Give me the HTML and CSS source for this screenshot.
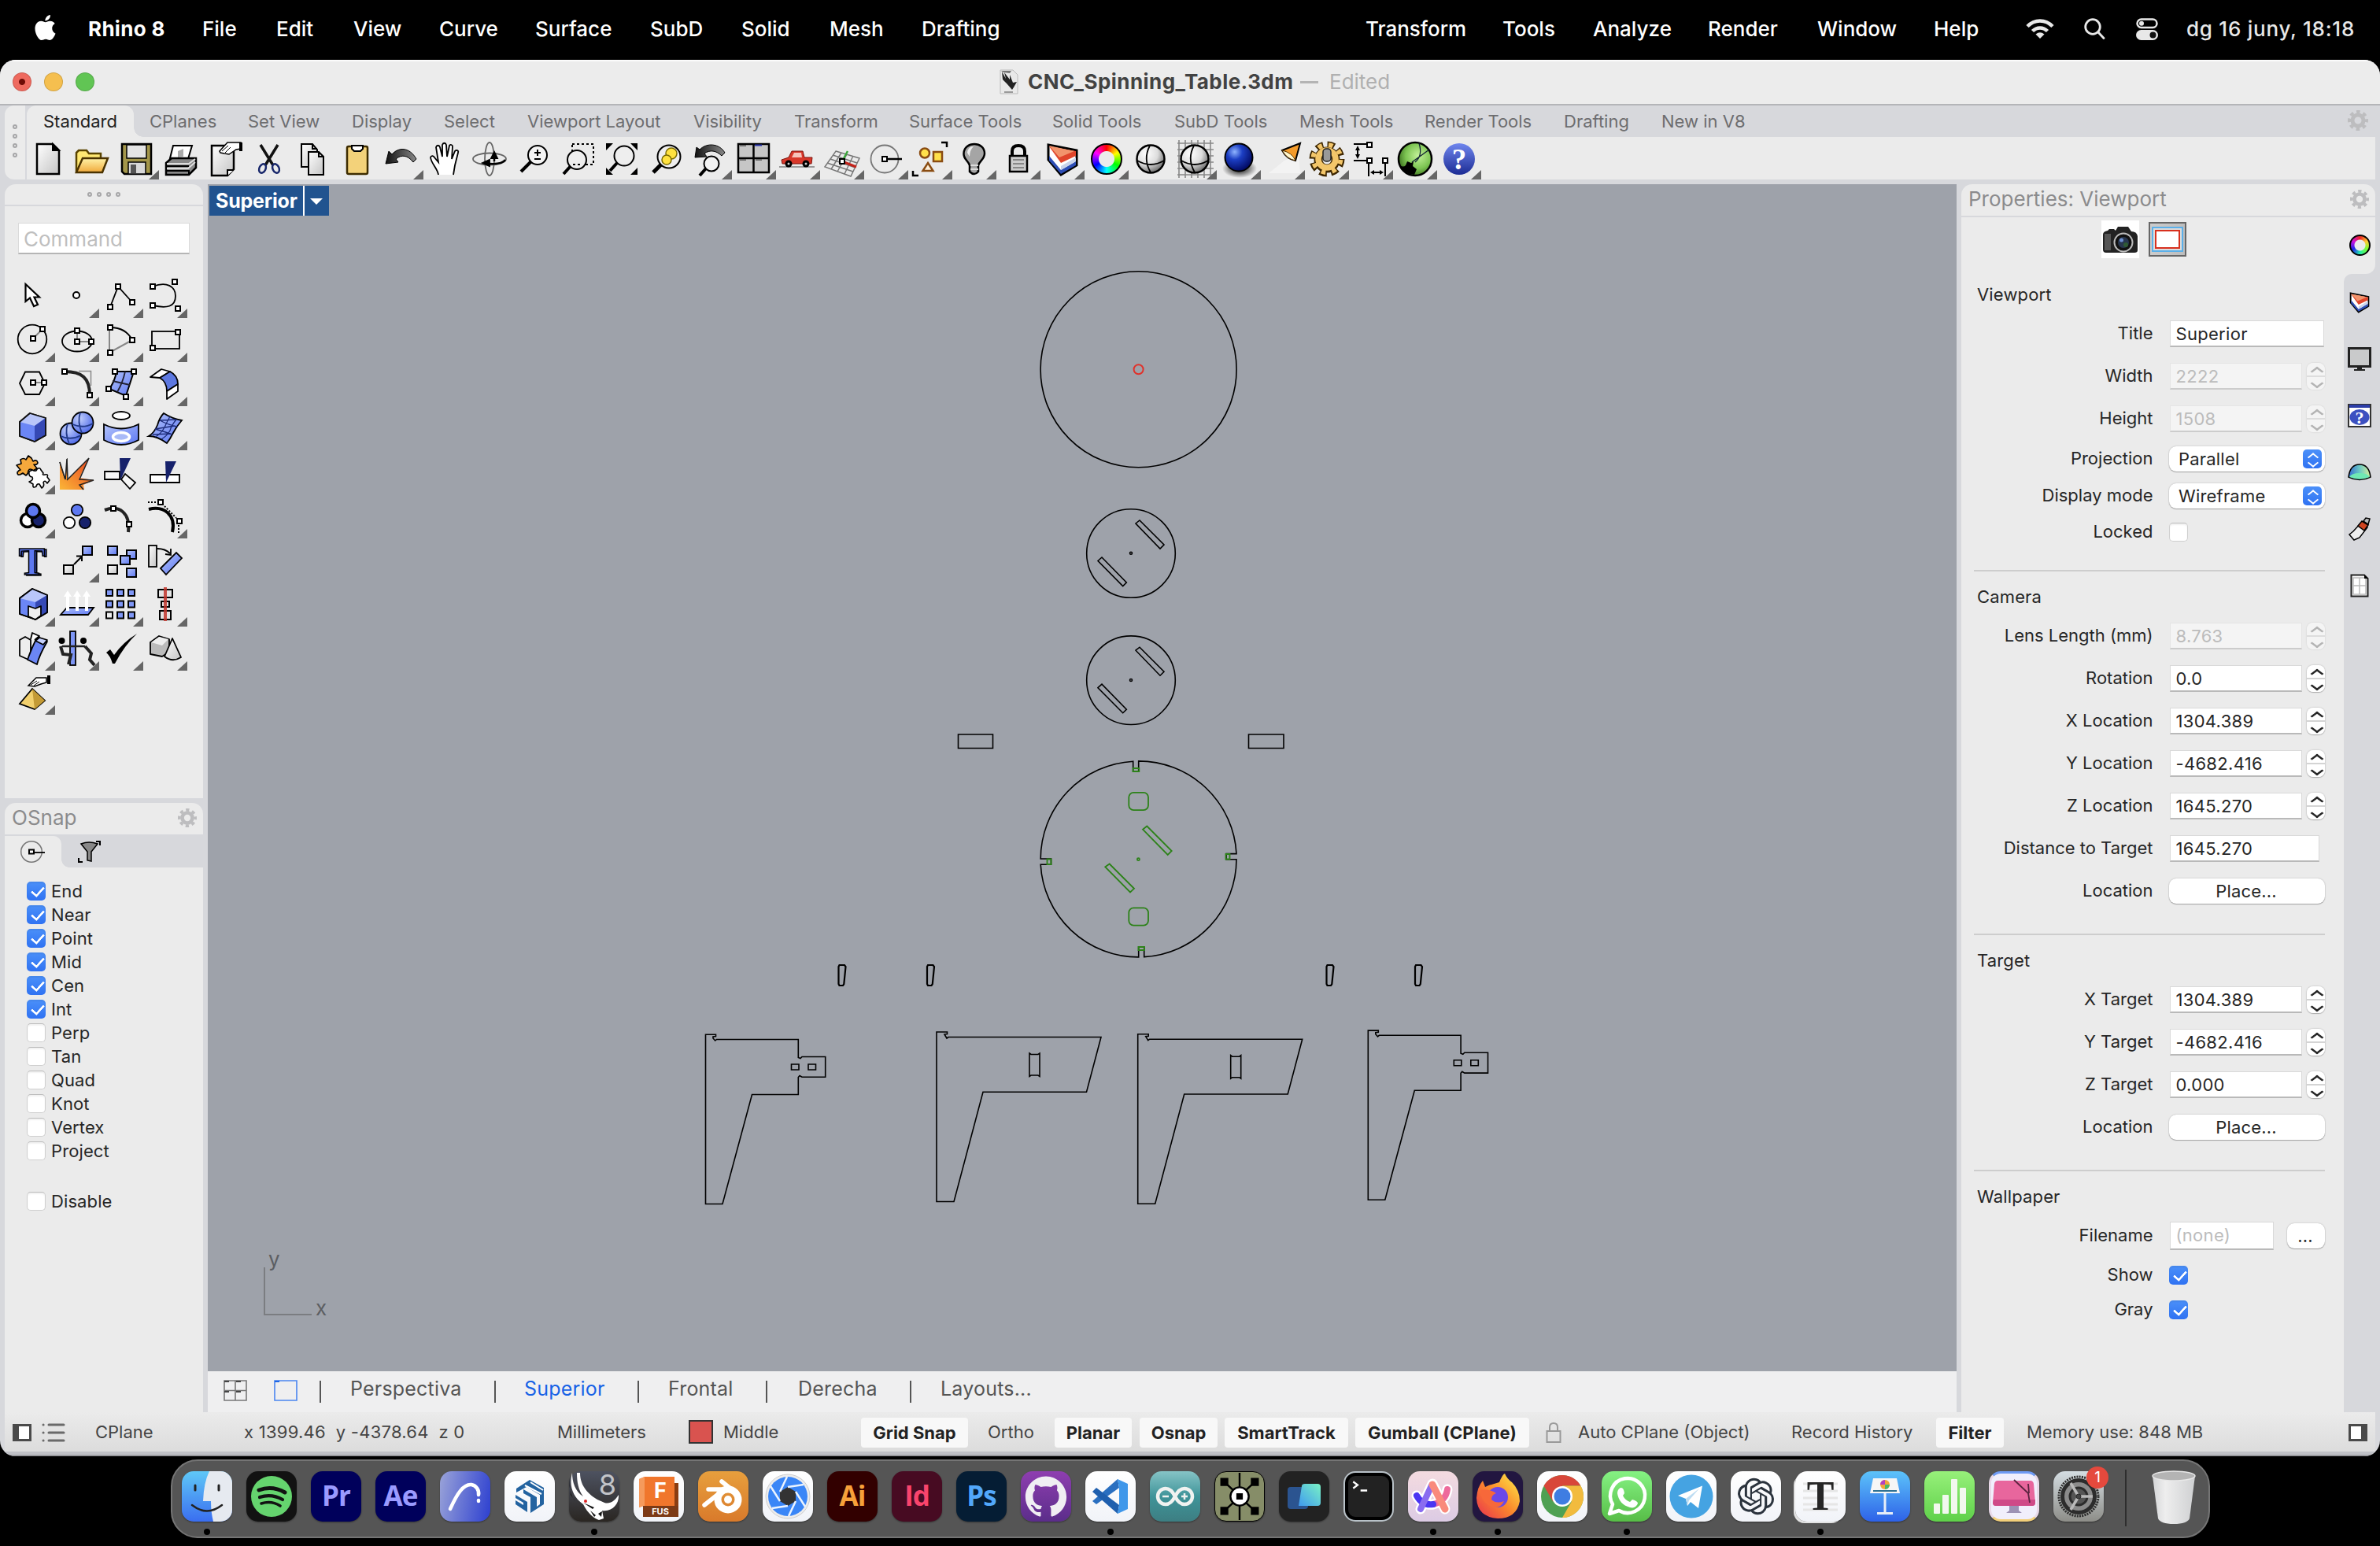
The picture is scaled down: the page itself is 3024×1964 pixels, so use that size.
FILE: index.html
```html
<!DOCTYPE html>
<html lang="en">
<head>
<meta charset="utf-8">
<title>CNC_Spinning_Table.3dm</title>
<link rel="stylesheet" href="styles.css">
</head>
<body>
<svg class="defs" width="0" height="0">
  <defs>
    <g id="h"><rect x="-3" y="-3" width="6" height="6" fill="#fff" stroke="#000" stroke-width="2"/></g>
    <linearGradient id="blue" x1="0" y1="0" x2="1" y2="1"><stop offset="0" stop-color="#b4c4fb"/><stop offset="1" stop-color="#5c77f2"/></linearGradient>
    <linearGradient id="gray" x1="0" y1="0" x2="1" y2="1"><stop offset="0" stop-color="#fff"/><stop offset="1" stop-color="#c4c4c4"/></linearGradient>
    <linearGradient id="dark" x1="0" y1="0" x2="1" y2="0"><stop offset="0" stop-color="#111"/><stop offset="1" stop-color="#888"/></linearGradient>
    <linearGradient id="gold" x1="0" y1="0" x2="0" y2="1"><stop offset="0" stop-color="#fff3a8"/><stop offset="1" stop-color="#f0a93a"/></linearGradient>
    <linearGradient id="fire" x1="0" y1="1" x2="1" y2="0"><stop offset="0" stop-color="#fbb637"/><stop offset="1" stop-color="#e8401f"/></linearGradient>
    <radialGradient id="ball" cx=".35" cy=".3" r=".75"><stop offset="0" stop-color="#fff"/><stop offset=".55" stop-color="#dcdcdc"/><stop offset="1" stop-color="#666"/></radialGradient>
    <radialGradient id="bball" cx=".35" cy=".3" r=".75"><stop offset="0" stop-color="#c3d0fc"/><stop offset="1" stop-color="#4c68e8"/></radialGradient>
    <radialGradient id="navyball" cx=".35" cy=".3" r=".7"><stop offset="0" stop-color="#8fb4ff"/><stop offset=".4" stop-color="#1c3fc4"/><stop offset="1" stop-color="#020b66"/></radialGradient>
    <radialGradient id="greenball" cx=".6" cy=".4" r=".7"><stop offset="0" stop-color="#c4f29a"/><stop offset=".55" stop-color="#7cc452"/><stop offset="1" stop-color="#2b5c12"/></radialGradient>
    <radialGradient id="shade"><stop offset="0" stop-color="#000"/><stop offset="1" stop-color="#000" stop-opacity="0"/></radialGradient>
    <linearGradient id="help" x1="0" y1="0" x2="0" y2="1"><stop offset="0" stop-color="#6f86ee"/><stop offset="1" stop-color="#1c2c94"/></linearGradient>
    <g id="gear"><circle cx="13" cy="13" r="7" fill="none" stroke="#bdbdbf" stroke-width="5"/><circle cx="13" cy="13" r="11" fill="none" stroke="#bdbdbf" stroke-width="4" stroke-dasharray="4.6 4.04" stroke-dashoffset="2.3"/></g>
    <g id="layers"><path d="M10 12L46 19V38L26 50L10 31Z" fill="#fff" stroke="#000" stroke-width="3"/><path d="M11 26L26 44L45 33V38L26 49L11 32Z" fill="#2d4db4"/><path d="M11 14L26 35L45 26V20Z" fill="#e0452b"/><path d="M11 13L24 28L43 20Z" fill="#f2946c"/><path d="M26 39V44L45 33V28Z" fill="#c9d3ea"/></g>
  </defs>
</svg>

<header class="menubar">
  <svg class="apple" viewBox="2 0 20 24" fill="#fff"><path d="M12.152 6.896c-.948 0-2.415-1.078-3.96-1.04-2.04.027-3.91 1.183-4.961 3.014-2.117 3.675-.546 9.103 1.519 12.09 1.013 1.454 2.208 3.09 3.792 3.039 1.52-.065 2.09-.987 3.935-.987 1.831 0 2.35.987 3.96.948 1.637-.026 2.676-1.48 3.676-2.948 1.156-1.688 1.636-3.325 1.662-3.415-.039-.013-3.182-1.221-3.22-4.857-.026-3.04 2.48-4.494 2.597-4.559-1.429-2.09-3.623-2.324-4.39-2.376-2-.156-3.675 1.09-4.61 1.09zM15.53 3.83c.843-1.012 1.4-2.427 1.245-3.83-1.207.052-2.662.805-3.532 1.818-.78.896-1.454 2.338-1.273 3.714 1.338.104 2.715-.688 3.559-1.701"/></svg>
  <b>Rhino 8</b><span>File</span><span>Edit</span><span>View</span><span>Curve</span><span>Surface</span><span>SubD</span><span>Solid</span><span>Mesh</span><span>Drafting</span><span>Transform</span><span>Tools</span><span>Analyze</span><span>Render</span><span>Window</span><span>Help</span>
  <svg width="36" height="26" viewBox="0 0 36 26" fill="none" stroke="#e8e8e8" stroke-width="4.5"><path d="M2 9.5C11 0 25 0 34 9.500M8.500 15.500C14 10 22 10 27.500 15.500"/><path d="M18 25L12.500 19.500Q18 15 23.500 19.500Z" fill="#e8e8e8" stroke="none"/></svg>
  <svg width="27" height="27" viewBox="0 0 27 27" fill="none" stroke="#e8e8e8" stroke-width="2.800" stroke-linecap="round"><circle cx="11" cy="11" r="9.300"/><path d="M18 18L25 25.500"/></svg>
  <svg width="28" height="28" viewBox="0 0 28 28"><rect x="1.500" y="1.500" width="25" height="10.500" rx="5.250" fill="none" stroke="#e8e8e8" stroke-width="2.500"/><circle cx="7" cy="6.700" r="3" fill="#e8e8e8"/><rect y="15" width="28" height="13" rx="6.500" fill="#e8e8e8"/><circle cx="21.500" cy="21.500" r="4" fill="#111"/></svg>
  <span class="clock">dg 16 juny, 18:18</span>
</header>

<div class="window">
  <div class="titlebar">
    <div class="lights"><i class="red"></i><i class="yellow"></i><i class="green"></i></div>
    <div class="doc">
      <svg width="24" height="32" viewBox="0 0 24 32"><path d="M1 1H17L23 7V31H1Z" fill="#e9e9e9" stroke="#bbb"/><path d="M3 3L8 12L6 4L13 13L13 7L17 17L22 16L18 23L16 26L9 18L4 13Z" fill="#222"/><path d="M2 2H15L13 5L5 4Z" fill="#777"/><path d="M6 29H17" stroke="#999" stroke-width="2"/></svg>
      <b>CNC_Spinning_Table.3dm</b><span class="dash"></span><span class="edited">Edited</span>
    </div>
  </div>

  <div class="ribbon">
    <div class="grip"><i></i><i></i><i></i><i></i></div>
    <div class="ribbon-main">
      <nav class="tabs">
        <span class="tab-on">Standard</span><span>CPlanes</span><span>Set View</span><span>Display</span><span>Select</span><span>Viewport Layout</span><span>Visibility</span><span>Transform</span><span>Surface Tools</span><span>Solid Tools</span><span>SubD Tools</span><span>Mesh Tools</span><span>Render Tools</span><span>Drafting</span><span>New in V8</span>
        <svg width="26" height="26"><use href="#gear"/></svg>
      </nav>
      <div class="toolbar">
        <div class="cell"><svg viewBox="0 0 56 56"><path d="M13 11H33L41 19V49H13Z" fill="url(#gray)" stroke="#000" stroke-width="2.500"/><path d="M33 11V19H41Z" stroke="#000" stroke-width="2"/></svg></div>
        <div class="cell"><svg viewBox="0 0 56 56"><path d="M7 47V22L10 19H20L23 23H38V29" fill="#ffe873" stroke="#5a4400" stroke-width="2.500"/><path d="M7 47L15 29H47L40 47Z" fill="url(#gold)" stroke="#4a3200" stroke-width="2.500"/></svg></div>
        <div class="cell more"><svg viewBox="0 0 56 56"><path d="M9 11H46V49H12L9 46Z" fill="#a3964a" stroke="#000" stroke-width="2.500"/><path d="M15 12H40V29H15Z" fill="#e4e4e4" stroke="#000" stroke-width="1.500"/><path d="M17 34H39V49H17Z" fill="#d8d8d8" stroke="#000" stroke-width="1.500"/><path d="M20 37H27V48H20Z" fill="#555"/></svg></div>
        <div class="cell"><svg viewBox="0 0 56 56"><path d="M18 13H42L36 33H13Z" fill="#fff" stroke="#000" stroke-width="2"/><path d="M24 20L31 17V27L24 28Z" fill="#aaa"/><path d="M9 35L16 29H47V41L38 50H9Z" fill="#888" stroke="#000" stroke-width="2.500"/><path d="M10 36H38L46 30M10 42H37L46 34" fill="none" stroke="#ddd" stroke-width="2"/><path d="M9 39H38M9 45H38V50" fill="none" stroke="#000" stroke-width="2"/></svg></div>
        <div class="cell"><svg viewBox="0 0 56 56"><path d="M11 13H39V43L31 51H11Z" fill="url(#gray)" stroke="#000" stroke-width="2.500"/><path d="M31 51V44H39" fill="#fff" stroke="#000" stroke-width="2"/><path d="M21 20L31 9H48V17L42 18L33 24L27 23L22 22Z" fill="#fff" stroke="#000" stroke-width="1.500"/><path d="M24 20L32 13M28 22L35 15" stroke="#000"/><path d="M46 9H50V20H46Z"/></svg></div>
        <div class="cell"><svg viewBox="0 0 56 56"><path d="M17 12L33 38M39 12L23 38" stroke="#111" stroke-width="3.500"/><ellipse cx="19.500" cy="42" rx="4" ry="6" transform="rotate(25 19.500 42)" fill="none" stroke="#18276b" stroke-width="2.500"/><ellipse cx="36.500" cy="42" rx="4" ry="6" transform="rotate(-25 36.500 42)" fill="none" stroke="#18276b" stroke-width="2.500"/></svg></div>
        <div class="cell"><svg viewBox="0 0 56 56"><path d="M13 11H27L33 18V40H13Z" fill="url(#gray)" stroke="#000" stroke-width="2"/><path d="M22 21H35L41 27V50H22Z" fill="url(#gray)" stroke="#000" stroke-width="2"/><path d="M35 21V27H41M27 11V17H33" fill="none" stroke="#000" stroke-width="2"/></svg></div>
        <div class="cell"><svg viewBox="0 0 56 56"><rect x="15" y="14" width="26" height="35" rx="2" fill="#f3d27a" stroke="#3d2c00" stroke-width="2.500"/><path d="M21 13H35V17L32 20H24L21 17Z" fill="#fff" stroke="#000" stroke-width="2"/></svg></div>
        <div class="cell more"><svg viewBox="0 0 56 56"><path d="M8 36L12 20L16 24C24 15 38 14 47 30L43 34C36 25 28 24 21 30L24 34Z" fill="url(#dark)" stroke="#000"/></svg></div>
        <div class="cell"><svg viewBox="0 0 56 56"><path d="M19 50C18 42 10 36 9 28C10 25 13 26 14 28L19 34L16 15C17 12 20 12 21 15L24 27L24 12C25 9 28 9 29 12L30 27L33 13C34 11 37 12 37 14L36 30L40 20C42 18 45 19 44 22L40 38L38 50" fill="#fff" stroke="#000" stroke-width="1.800"/></svg></div>
        <div class="cell"><svg viewBox="0 0 56 56" fill="none" stroke="#666" stroke-width="1.800"><ellipse cx="28" cy="30" rx="21" ry="7.500"/><ellipse cx="28" cy="30" rx="6" ry="21"/><path d="M19 35L28 31V39ZM34 21L38 29H30Z" fill="#000" stroke="#000"/><path d="M28 36Q44 37 48 31M34 29V33" stroke="#000" stroke-width="2.500"/></svg></div>
        <div class="cell"><svg viewBox="0 0 56 56"><path d="M12 46L25 33" stroke="#000" stroke-width="4"/><circle cx="33" cy="25" r="12" fill="#f4f4f4" stroke="#000" stroke-width="2"/><path d="M29 22H37M33 18V26M29 30H37" stroke="#000" stroke-width="2"/></svg></div>
        <div class="cell"><svg viewBox="0 0 56 56"><rect x="21" y="11" width="27" height="26" fill="none" stroke="#000" stroke-width="2" stroke-dasharray="3 3"/><path d="M10 49L19 39" stroke="#000" stroke-width="4"/><circle cx="27" cy="31" r="12" fill="#eee" stroke="#000" stroke-width="2"/><path d="M22 37H33" stroke="#000" stroke-width="2" stroke-dasharray="3 3"/></svg></div>
        <div class="cell"><svg viewBox="0 0 56 56"><path d="M8 10H17L8 19ZM48 10V19L39 10ZM8 50V41L17 50ZM48 50H39L48 41Z"/><path d="M13 45L22 35" stroke="#000" stroke-width="4"/><circle cx="31" cy="26" r="12.500" fill="#eee" stroke="#000" stroke-width="2"/></svg></div>
        <div class="cell"><svg viewBox="0 0 56 56"><path d="M12 47L22 37" stroke="#000" stroke-width="5"/><circle cx="32" cy="27" r="14.500" fill="#eee" stroke="#000" stroke-width="2"/><circle cx="35" cy="23" r="7" fill="#ffe23f" stroke="#7a6a00" stroke-width="1.500"/><circle cx="29" cy="31" r="6" fill="#ffe23f" stroke="#7a6a00" stroke-width="1.500"/></svg></div>
        <div class="cell more"><svg viewBox="0 0 56 56"><path d="M9 28L11 15L15 18C24 9 40 10 47 22L43 26C36 19 28 18 21 23L24 27Z" fill="url(#dark)" stroke="#000"/><path d="M15 51L23 42" stroke="#000" stroke-width="4"/><circle cx="30" cy="36" r="9.500" fill="#f2f2f2" stroke="#000" stroke-width="2"/></svg></div>
        <div class="cell more"><svg viewBox="0 0 56 56"><rect x="8" y="11" width="39" height="36" fill="#c6c6c6" stroke="#000" stroke-width="2.500"/><path d="M27.500 10V47M8 29H47" stroke="#000" stroke-width="2.500"/><path d="M29 12.500H38" stroke="#2430a8" stroke-width="2"/><path d="M10 13H18M10 31H18M30 31H38" stroke="#666" stroke-width="2"/></svg></div>
        <div class="cell more"><svg viewBox="0 0 56 56"><path d="M4 40H49" stroke="#999" stroke-width="2"/><path d="M8 36L7 31L16 28L20 20H34L36 28H46L45 36Z" fill="#d8372a" stroke="#7c130c"/><path d="M20 28L23 22H32L33 28Z" fill="#f6c3bb"/><circle cx="16" cy="36" r="4.500"/><circle cx="38" cy="36" r="4.500"/><circle cx="16" cy="36" r="1.500" fill="#ccc"/><circle cx="38" cy="36" r="1.500" fill="#ccc"/></svg></div>
        <div class="cell more"><svg viewBox="0 0 56 56" fill="none" stroke="#777" stroke-width="1.500"><path d="M20 20L50 29L39 52L6 40ZM27 22L14 43M34 24L22 46M42 26L31 49M16 25L47 35M13 30L45 41M9 35L42 46"/><path d="M28 33L35 20" stroke="#3aa53a" stroke-width="2.500"/><path d="M28 33L46 40" stroke="#c3241c" stroke-width="3"/><use href="#h" x="28" y="33"/></svg></div>
        <div class="cell more"><svg viewBox="0 0 56 56"><circle cx="26" cy="30" r="17.500" fill="none" stroke="#777" stroke-width="1.800"/><path d="M27 30H48" stroke="#000" stroke-width="2.500"/><use href="#h" x="26" y="30"/></svg></div>
        <div class="cell more"><svg viewBox="0 0 56 56" fill="#ffe04a" stroke="#8a4c12" stroke-width="2.500"><circle cx="21" cy="22.500" r="6"/><rect x="32" y="21" width="11" height="12"/><path d="M25 35L31.500 45H18.500Z" fill="#fff2dc"/><path d="M42 9H49V15M6 45V51H13" fill="none" stroke="#000"/></svg></div>
        <div class="cell more"><svg viewBox="0 0 56 56"><path d="M22 38C20 32 14 30 14.500 23C15 7 41 7 41 23C41 30 35 32 33 38V46Q28 52 22 46Z" fill="#a5a5a5" stroke="#000" stroke-width="2.500"/><path d="M19 22Q20 14 27 14Q22 19 22 27" fill="#eee"/><path d="M23 38H33M23 43H33" stroke="#ddd" stroke-width="2"/></svg></div>
        <div class="cell more"><svg viewBox="0 0 56 56"><path d="M20 26V20Q20 13 28 13T36 20V26" fill="none" stroke="#000" stroke-width="4"/><rect x="17" y="26" width="22" height="20" fill="#ccc" stroke="#000" stroke-width="2.500"/><path d="M21 31H35M21 36H35M21 41H35" stroke="#888" stroke-width="2"/></svg></div>
        <div class="cell more"><svg viewBox="0 0 56 56"><use href="#layers"/></svg></div>
        <div class="cell more"><i class="wheel"></i></div>
        <div class="cell"><svg viewBox="0 0 56 56"><circle cx="28" cy="30" r="17.500" fill="url(#ball)" stroke="#000" stroke-width="2.500"/><path d="M27 13Q18 30 28 47M11 32Q28 42 45 32" fill="none" stroke="#000" stroke-width="1.800"/></svg></div>
        <div class="cell more"><svg viewBox="0 0 56 56"><path d="M6 10H52M6 18H52M6 26H52M6 34H52M6 42H52M6 50H52M8 6V54M16 6V54M24 6V54M32 6V54M40 6V54M48 6V54" stroke="#888" stroke-width="1.600"/><circle cx="28" cy="30" r="17.500" fill="url(#ball)" stroke="#000" stroke-width="2.500"/><path d="M27 13Q18 30 28 47M11 32Q28 42 45 32" fill="none" stroke="#000" stroke-width="1.800"/></svg></div>
        <div class="cell more"><svg viewBox="0 0 56 56"><ellipse cx="29" cy="42" rx="22" ry="12" fill="url(#shade)"/><circle cx="28" cy="28" r="17.500" fill="url(#navyball)" stroke="#000" stroke-width="2"/></svg></div>
        <div class="cell more"><svg viewBox="0 0 56 56"><path d="M30 32L10 48H50L48 24Z" fill="#f7f7f7" opacity=".7"/><path d="M27 19L50 10L44 32Q33 30 27 19Z" fill="#f49b2a" stroke="#000" stroke-width="2"/><path d="M27 19Q33 30 44 32Q40 22 27 19Z" fill="#fff6cc" stroke="#5a3300"/></svg></div>
        <div class="cell more"><svg viewBox="0 0 56 56" fill="none"><circle cx="28" cy="30" r="17.500" stroke="#3d2600" stroke-width="10" stroke-dasharray="8.600 5.145"/><circle cx="28" cy="31" r="11" stroke="#3d2600" stroke-width="11"/><circle cx="28" cy="29.500" r="17.500" stroke="#f3c66a" stroke-width="6" stroke-dasharray="5.400 8.345" stroke-dashoffset="-1.600"/><circle cx="28" cy="30" r="11" stroke="#f3c66a" stroke-width="7.500"/><rect x="23" y="17" width="10" height="16" rx="4" fill="#999" stroke="#222" stroke-width="1.500"/></svg></div>
        <div class="cell more"><svg viewBox="0 0 56 56" fill="none" stroke="#000" stroke-width="2"><path d="M6 11H24M6 32H24M11 15V28M25 35V52M46 35V52M29 47H42"/><path d="M11 13L8 19H14ZM11 30L8 24H14ZM27 47L32 44V50ZM44 47L39 44V50Z" fill="#000" stroke="none"/><use href="#h" x="26" y="12"/><use href="#h" x="26" y="32"/><use href="#h" x="46" y="32"/></svg></div>
        <div class="cell more"><svg viewBox="0 0 56 56"><circle cx="28" cy="30" r="21" fill="url(#greenball)" stroke="#000" stroke-width="2.500"/><path d="M9 38Q13 41 16 38L18 33L23 35L26 33L25 39L30 43L27 50Q14 49 9 38Z"/><path d="M24 34L46 18M33 10Q38 26 28 34" fill="none" stroke="#123" stroke-width="1.300"/></svg></div>
        <div class="cell more"><svg viewBox="0 0 56 56"><circle cx="28" cy="30" r="20" fill="url(#help)"/><text x="28" y="43" class="q">?</text></svg></div>
      </div>
    </div>
  </div>

  <main class="main">
    <aside class="left">
      <section class="panel tools-panel">
        <div class="grip-row"><i></i><i></i><i></i><i></i></div>
        <div class="command">Command</div>
        <div class="tools">
          <div class="cell"><svg viewBox="0 0 56 56"><path d="M18.500 13V35L24 30.500L29 41L34 39L29.500 29.500H36Z" fill="#fff" stroke="#000" stroke-width="2.200"/></svg></div>
          <div class="cell more"><svg viewBox="0 0 56 56"><circle cx="27" cy="27" r="4" fill="#fff" stroke="#000" stroke-width="2"/></svg></div>
          <div class="cell more"><svg viewBox="0 0 56 56"><path d="M14 42L24 16L42 36" fill="none" stroke="#000" stroke-width="1.800"/><use href="#h" x="14" y="42"/><use href="#h" x="24" y="16"/><use href="#h" x="42" y="36"/></svg></div>
          <div class="cell more"><svg viewBox="0 0 56 56"><path d="M12 16C30 9 41 16 41 28C41 42 30 44 12 40" fill="none" stroke="#000" stroke-width="1.800"/><use href="#h" x="12" y="16"/><use href="#h" x="40" y="10"/><use href="#h" x="12" y="40"/><use href="#h" x="44" y="44"/></svg></div>

          <div class="cell more"><svg viewBox="0 0 56 56"><circle cx="27" cy="27" r="18.300" fill="none" stroke="#000" stroke-width="1.800"/><path d="M28 26L40 14" stroke="#888" stroke-width="2"/><use href="#h" x="28" y="26"/><use href="#h" x="40" y="14"/></svg></div>
          <div class="cell more"><svg viewBox="0 0 56 56"><ellipse cx="28" cy="29.500" rx="19" ry="13" fill="none" stroke="#000" stroke-width="1.800"/><path d="M28 16V30H46" fill="none" stroke="#888" stroke-width="2"/><use href="#h" x="28" y="16"/><use href="#h" x="28" y="30"/><use href="#h" x="46" y="30"/></svg></div>
          <div class="cell more"><svg viewBox="0 0 56 56" fill="none"><path d="M42 28L13 44V12" stroke="#888" stroke-width="2"/><path d="M14 12Q34 12 42 28" stroke="#000" stroke-width="1.800"/><use href="#h" x="14" y="12"/><use href="#h" x="14" y="44"/><use href="#h" x="42" y="28"/></svg></div>
          <div class="cell more"><svg viewBox="0 0 56 56"><rect x="11" y="17" width="35" height="22" fill="none" stroke="#000" stroke-width="1.800"/><use href="#h" x="44" y="18"/><use href="#h" x="12" y="38"/></svg></div>

          <div class="cell more"><svg viewBox="0 0 56 56"><path d="M11 27L18 12.500H36L43 27L36 41H18Z" fill="none" stroke="#000" stroke-width="1.800"/><path d="M28 26H42" stroke="#888" stroke-width="2"/><use href="#h" x="28" y="26"/><use href="#h" x="42" y="26"/></svg></div>
          <div class="cell more"><svg viewBox="0 0 56 56" fill="none"><path d="M30 11.500H45.500V30" stroke="#888" stroke-width="1.500"/><path d="M12 12C34 12 44 20 44 42" stroke="#222" stroke-width="4"/><use href="#h" x="12" y="12"/><use href="#h" x="44" y="42"/></svg></div>
          <div class="cell more"><svg viewBox="0 0 56 56"><path d="M22 12L44 12L34 43L13 34Q20 24 22 12Z" fill="url(#blue)" stroke="#000" stroke-width="2"/><path d="M17 24L39 29M33 12Q30 26 23 38" fill="none" stroke="#223" stroke-width="1.800"/><use href="#h" x="20" y="12"/><use href="#h" x="44" y="12"/><use href="#h" x="12" y="34"/><use href="#h" x="34" y="44"/></svg></div>
          <div class="cell more"><svg viewBox="0 0 56 56" stroke="#000" stroke-width="1.800" stroke-linejoin="round"><path d="M9 19L23 9L34 12L21 20Z" fill="#fff"/><path d="M21 20L34 12Q44 17 44 28L30 37Q30 25 21 20Z" fill="#5d78e0"/><path d="M30 37L44 28V37L30 47Z" fill="#fff"/></svg></div>

          <div class="cell more"><svg viewBox="0 0 56 56" stroke="#111" stroke-width="1.800" stroke-linejoin="round"><path d="M11 20L24 9L44 15V37L30 45L11 38Z" fill="#6b86f5"/><path d="M11 20L24 9L44 15L30 25Z" fill="#b9c6f9" stroke="none"/><path d="M30 25L44 15V37L30 45Z" fill="#3549b5" stroke="none"/><path d="M11 20L24 9L44 15V37L30 45L11 38Z" fill="none"/></svg></div>
          <div class="cell more"><svg viewBox="0 0 56 56" stroke="#000" stroke-width="1.800"><circle cx="20" cy="35" r="13.500" fill="url(#bball)"/><path d="M16 22Q12 34 18 48M7 38Q20 44 33 37" fill="none" stroke="#223a8a"/><circle cx="35" cy="21" r="13.500" fill="url(#bball)"/><path d="M32 8Q28 20 34 34M22 23Q36 29 48 22" fill="none" stroke="#223a8a"/></svg></div>
          <div class="cell more"><svg viewBox="0 0 56 56" stroke="#000" stroke-width="1.800"><ellipse cx="28" cy="12" rx="11" ry="5" fill="#fff"/><path d="M6 23Q28 34 50 23V43Q28 55 6 43Z" fill="url(#blue)"/><ellipse cx="28" cy="39" rx="10.500" ry="5.500" fill="#a9baf7" stroke="#fff" stroke-width="3.500"/></svg></div>
          <div class="cell more"><svg viewBox="0 0 56 56" stroke="#000" stroke-width="1.800"><path d="M26 9Q37 16 49 18Q42 26 38 34Q34 42 30 47Q18 38 7 38Q14 34 18 24Q21 14 26 9Z" fill="url(#blue)"/><path d="M21 18Q32 24 44 26M15 29Q26 32 37 36M34 13Q30 20 27 27Q22 36 15 39M42 17Q36 24 34 31Q30 38 23 42M21 18L42 17M15 29L40 25M12 36L35 35" fill="none" stroke="#1b2a78" stroke-width="1.300"/></svg></div>

          <div class="cell more"><svg viewBox="0 0 56 56" stroke="#000" stroke-width="1.600" stroke-linejoin="round"><path d="M7 19L13 17L12 12Q16 9 19 12L22 7L26 10L28 14Q33 11 34 16Q33 19 29 18L33 23L28 26Q24 22 22 26Q22 30 19 32L15 29Q8 34 8 28Q10 25 12 25Z" fill="#f5a83c"/><path d="M23 27L27 25Q32 28 33 24Q37 21 38 25L41 29Q39 32 43 31Q48 30 46 34L49 38L46 42Q43 37 41 41Q43 45 39 48L36 43Q33 42 32 46Q27 49 28 43L23 40Q29 38 27 34Q22 34 23 27Z" fill="#fff"/></svg></div>
          <div class="cell"><svg viewBox="0 0 56 56"><path d="M6 50V15L15 10V38L43 10L31 35L49 38L36 44L37 50Z" fill="url(#fire)"/><path d="M6 15L13 37L15 10M15 38L43 10L31 37L49 38L31 44L36 50" fill="none" stroke="#222" stroke-width="1.500"/><path d="M6 14L13 37L15 9H6Z" fill="#ebebeb"/><path d="M6 15L13 37L15 11L16 37" fill="none" stroke="#222" stroke-width="1.500"/></svg></div>
          <div class="cell"><svg viewBox="0 0 56 56"><path d="M7 27H26V37H7ZM28 37L33 30L46 41L39 49Z" fill="#f6f6f6" stroke="#000" stroke-width="1.800"/><path d="M26 10H40L27 38Z" fill="#16216b"/></svg></div>
          <div class="cell"><svg viewBox="0 0 56 56"><path d="M9 31H46V41H9Z" fill="#fff" stroke="#000" stroke-width="1.800"/><path d="M28 14H42L29 41Z" fill="#16216b"/></svg></div>

          <div class="cell more"><svg viewBox="0 0 56 56" stroke="#000" stroke-width="3.500"><circle cx="21" cy="33" r="8.500" fill="#fff"/><circle cx="35" cy="33" r="8.500" fill="#16216b"/><circle cx="28" cy="21" r="8.500" fill="#5d78f0"/></svg></div>
          <div class="cell"><svg viewBox="0 0 56 56" stroke="#000" stroke-width="1.800"><circle cx="28" cy="20" r="7.200" fill="#5d78f0"/><circle cx="18" cy="36" r="7.200" fill="#fff"/><circle cx="38" cy="36" r="7.200" fill="#16216b"/></svg></div>
          <div class="cell"><svg viewBox="0 0 56 56" fill="none"><path d="M7 20C26 13 40 24 37 48" stroke="#222" stroke-width="4"/><use href="#h" x="18" y="18"/><use href="#h" x="38" y="38"/></svg></div>
          <div class="cell more"><svg viewBox="0 0 56 56" fill="none" stroke="#000"><path d="M7 19C26 14 42 26 37 48" stroke-width="4"/><path d="M6 10H18M27 15L42 30M45 39V51" stroke-width="2" stroke-dasharray="2 2"/><use href="#h" x="22" y="10"/><use href="#h" x="46" y="34"/></svg></div>

          <div class="cell"><svg viewBox="0 0 56 56"><text x="29" y="46.500" class="tee tee-side">T</text><text x="26.500" y="46" class="tee">T</text></svg></div>
          <div class="cell more"><svg viewBox="0 0 56 56" stroke="#000" stroke-width="2"><rect x="11" y="34" width="12" height="11" fill="url(#gray)"/><rect x="35" y="10" width="12" height="11" fill="url(#blue)"/><path d="M24 33L33 24M27 22.500H34V29" fill="none"/></svg></div>
          <div class="cell"><svg viewBox="0 0 56 56" stroke="#000" stroke-width="2"><rect x="11" y="10" width="12" height="11" fill="url(#blue)"/><rect x="11" y="34" width="12" height="11" fill="url(#gray)"/><rect x="35" y="15" width="12" height="11" fill="url(#blue)"/><rect x="27" y="22" width="12" height="11" fill="url(#blue)"/><rect x="35" y="38" width="12" height="11" fill="url(#blue)"/></svg></div>
          <div class="cell"><svg viewBox="0 0 56 56" stroke="#000" stroke-width="1.800"><rect x="7" y="9" width="10" height="27" fill="url(#gray)"/><path d="M18 13Q28 13 34 19M35 13V21L28 20" fill="none"/><path d="M22 38L42 18L49 25L29 46Z" fill="url(#blue)"/></svg></div>

          <div class="cell more"><svg viewBox="0 0 56 56" stroke="#000" stroke-width="1.800" stroke-linejoin="round"><path d="M11 20L27 8L46 16V38L31 47L11 40Z" fill="#6b86f5"/><path d="M11 20L27 8L46 16L31 25Z" fill="#b9c6f9" stroke="none"/><path d="M31 25L46 16V38L31 47Z" fill="#3549b5" stroke="none"/><path d="M11 20L27 8L46 16V38L31 47L11 40Z" fill="none"/><path d="M22 30L31 33L38 30V42L31 47L22 43Z" fill="#eee"/></svg></div>
          <div class="cell more"><svg viewBox="0 0 56 56"><path d="M7 41L15 32H49L42 41Z" fill="url(#blue)" stroke="#000" stroke-width="1.800"/><path d="M14 36V18H11L16 10L21 18H18V36ZM26 36V18H23L28 10L33 18H30V36ZM38 36V18H35L40 10L45 18H42V36Z" fill="#fff"/></svg></div>
          <div class="cell more"><svg viewBox="0 0 56 56" stroke="#000" stroke-width="2" fill="#7f97f6"><path d="M9 9h8v8h-8zM23 9h8v8h-8zM37 9h8v8h-8zM9 23.500h8v8h-8zM23 23.500h8v8h-8zM37 23.500h8v8h-8zM23 37.500h8v8h-8zM37 37.500h8v8h-8z"/><path d="M9 37.500h8v8h-8z" fill="#eee"/></svg></div>
          <div class="cell more"><svg viewBox="0 0 56 56" stroke="#000" stroke-width="2" fill="#e4e4e4"><path d="M19 9H37V19H19ZM23 24H33V31H23ZM21 36H35V47H21Z"/><path d="M26 6H30V49H26Z" fill="#c2362d" opacity=".85" stroke="none"/></svg></div>

          <div class="cell more"><svg viewBox="0 0 56 56" stroke="#000" stroke-width="1.800" stroke-linejoin="round"><path d="M11 17L18 13L25 17V43L20 41L11 37Z" fill="#eee"/><path d="M25 16L27 8L36 12L30 17" fill="#fff"/><path d="M31 18Q26 28 21 42L33 48Q36 36 46 19L36 14Z" fill="#6b86f5"/><path d="M31 18L36 14L46 17L41 23Z" fill="#c6d1fb"/></svg></div>
          <div class="cell more"><svg viewBox="0 0 56 56"><rect x="19" y="6" width="7" height="43" fill="#7f97f6" stroke="#000" stroke-width="1.800"/><circle cx="8.500" cy="18" r="4"/><circle cx="36" cy="18" r="4"/><path d="M9 25H38" stroke="#222" stroke-width="2.500"/><path d="M7 25L10 35L20 36L17 48M38 25L46 34L44 42L50 49" fill="none" stroke="#222" stroke-width="4"/></svg></div>
          <div class="cell more"><svg viewBox="0 0 56 56"><path d="M9 33L14 29L19 36Q30 20 48 9Q32 24 20 47H17Q14 37 9 33Z"/></svg></div>
          <div class="cell more"><svg viewBox="0 0 56 56" stroke="#000" stroke-width="1.800" stroke-linejoin="round"><path d="M9 20L20 12L33 16V32L24 38L9 35Z" fill="#bbb"/><path d="M10 20L20 13L32 16L24 24Z" fill="#eee" stroke="none"/><path d="M37 15L27 38Q37 46 48 39Z" fill="url(#gray)"/></svg></div>

          <div class="cell more"><svg viewBox="0 0 56 56"><path d="M11 42L27 23L43 38L30 49Z" fill="#f2d06d" stroke="#000" stroke-width="1.800"/><path d="M27 23L43 38L30 49Z" fill="#c39a35"/><path d="M22 19L32 9H45V15L38 17L30 20Z" fill="#fff" stroke="#000" stroke-width="1.500"/><path d="M25 18L33 13M29 19L36 14" stroke="#000"/><path d="M46 6H50V17H46Z"/></svg></div>
        </div>
      </section>

      <section class="panel osnap">
        <div class="panel-head"><span>OSnap</span><svg width="24" height="24" viewBox="0 0 26 26"><use href="#gear"/></svg></div>
        <div class="osnap-tabs">
          <span class="osnap-tab on"><svg viewBox="0 0 34 30" width="34" height="30"><circle cx="15" cy="15" r="13.300" fill="none" stroke="#777" stroke-width="1.500"/><path d="M15 16H32" stroke="#000" stroke-width="1.800"/><rect x="12" y="12.500" width="6" height="5" fill="#fff" stroke="#000" stroke-width="2"/></svg></span>
          <span class="osnap-tab"><svg viewBox="0 0 30 30" width="30" height="30"><path d="M4 5Q14 1 25 5L17 15V27L12 26V15Z" fill="#888" stroke="#000" stroke-width="1.500"/><path d="M23 2H28V7M1 23V28H6" fill="none" stroke="#000" stroke-width="2"/></svg></span>
        </div>
        <div class="checks">
          <label><i class="cb on"></i>End</label>
          <label><i class="cb on"></i>Near</label>
          <label><i class="cb on"></i>Point</label>
          <label><i class="cb on"></i>Mid</label>
          <label><i class="cb on"></i>Cen</label>
          <label><i class="cb on"></i>Int</label>
          <label><i class="cb"></i>Perp</label>
          <label><i class="cb"></i>Tan</label>
          <label><i class="cb"></i>Quad</label>
          <label><i class="cb"></i>Knot</label>
          <label><i class="cb"></i>Vertex</label>
          <label><i class="cb"></i>Project</label>
          <label class="disable"><i class="cb"></i>Disable</label>
        </div>
      </section>
    </aside>

    <section class="center">
      <div class="viewport">
        <svg class="drawing" viewBox="264 234 2222 1508" fill="none" stroke="#000" stroke-width="1.600">
          <circle cx="1446.600" cy="469.300" r="124.500"/>
          <circle cx="1446.600" cy="469.300" r="6" stroke="#e0322b" stroke-width="2"/>
          <g id="disc"><circle cx="1437" cy="703" r="56.300"/><circle cx="1437" cy="702.800" r="1.500"/><path d="M1443 665L1448 661L1479 692L1474 697ZM1395 712.500L1400 708L1431.300 740L1426.700 744.500Z"/></g>
          <use href="#disc" y="161.200"/>
          <path d="M1217.500 933H1261.500V950.500H1217.500ZM1586.500 933H1631V950.500H1586.500Z"/>
          <path d="M1446.700 966.900A124.500 124.500 0 0 1 1571 1084.600H1558V1091.700H1571A124.500 124.500 0 0 1 1453.700 1215.600V1203H1446.700V1215.900A124.500 124.500 0 0 1 1322.200 1098.200H1335.500V1091H1322.200A124.500 124.500 0 0 1 1439.700 967.200V980H1446.700Z"/>
          <g stroke="#2c8218" stroke-width="1.800"><path d="M1439.500 976H1447.300V980H1439.500ZM1446.500 1203H1454V1207H1446.500ZM1330.500 1091.500H1335.500V1098H1330.500ZM1557.500 1085H1562.500V1091.500H1557.500Z"/><rect x="1434.300" y="1006.800" width="24.700" height="22.300" rx="6"/><rect x="1434.300" y="1153.300" width="24.700" height="22.300" rx="6"/><path d="M1452 1053.700L1457.300 1049.500L1488.700 1081L1483.700 1086ZM1404.300 1101.300L1409.700 1097.500L1441 1128.800L1436 1133.500Z"/><circle cx="1446.400" cy="1091.700" r="1.500"/></g>
          <g stroke-width="2.200"><path id="peg" d="M1066.500 1226H1073L1074.500 1228L1072.300 1250L1071 1252H1066.500L1065.500 1250V1228Z"/><use href="#peg" x="112.500"/><use href="#peg" x="620"/><use href="#peg" x="732.500"/></g>
          <g id="tenon-leg"><path d="M896.500 1314.300H909.500V1316.500L906 1317V1319L908.700 1322L910.500 1320.500H1014.300V1343.500L1017 1344.500L1019 1342.500H1048.700V1368.300H1019L1016 1366.500L1014.300 1368.500V1390.500H955.500L918 1529.500H896.500Z"/><path d="M1005.500 1352H1015V1359H1005.500ZM1027 1352H1036.500V1359H1027Z"/></g>
          <use href="#tenon-leg" x="841.800" y="-5.200"/>
          <g id="slot-leg"><path d="M1190 1311H1203.500V1313.500L1200 1314L1203 1319L1205 1317.500H1399L1380.500 1387.300H1249L1212 1526.500H1190Z"/><path d="M1308 1338L1310 1339.500H1319L1321 1338V1367.500L1319 1366H1310L1308 1367.500Z"/></g>
          <use href="#slot-leg" x="255.700" y="2.700"/>
          <path d="M336 1610V1670H396" stroke="#7b7d81" stroke-width="2"/>
          <text x="341" y="1609" class="axis">y</text><text x="401" y="1671" class="axis">x</text>
        </svg>
        <div class="vp-label"><span>Superior</span><i></i></div>
      </div>
      <nav class="vp-tabs">
        <svg width="30" height="27" viewBox="0 0 30 27" fill="none" stroke="#777" stroke-width="1.600"><path d="M1 1H29V26H1ZM15 1V26M1 13.500H29"/><path d="M1 2H7M16 2H22M1 15H7M16 15H22" stroke="#444" stroke-width="2"/></svg>
        <svg width="30" height="27" viewBox="0 0 30 27" fill="none" stroke="#4b86f0" stroke-width="1.600"><path d="M1 1H29V26H1Z"/><path d="M1 2H7" stroke="#1f66e5" stroke-width="2"/></svg>
        <i></i><span>Perspectiva</span><i></i><span class="active">Superior</span><i></i><span>Frontal</span><i></i><span>Derecha</span><i></i><span>Layouts...</span>
      </nav>
    </section>

    <aside class="panel right">
      <div class="panel-head"><span>Properties: Viewport</span><svg width="24" height="24" viewBox="0 0 26 26"><use href="#gear"/></svg></div>
      <div class="props">
        <div class="form">
          <div class="modes">
            <span class="mode-cam"><svg viewBox="0 0 48 48" width="48" height="48"><path d="M2 18Q2 14 8 13L10 11H16L18 13L21 8H34L38 14Q45 14 46 20V38Q46 41 42 41H6Q2 41 2 37Z" fill="#222"/><path d="M4 17H12V38H4Z" fill="#555"/><circle cx="28" cy="28" r="11.500" fill="#111" stroke="#bbb" stroke-width="2"/><circle cx="28" cy="28" r="7" fill="#27364e"/><circle cx="25.500" cy="25" r="2.500" fill="#6d8fd0"/><circle cx="31" cy="31" r="3" fill="#2f5a34"/></svg></span>
            <span class="mode-vp"><i></i></span>
          </div>
          <h4>Viewport</h4>
          <div class="row"><label>Title</label><div class="field full">Superior</div></div>
          <div class="row"><label>Width</label><div class="field off">2222</div><i class="step off"></i></div>
          <div class="row"><label>Height</label><div class="field off">1508</div><i class="step off"></i></div>
          <div class="row projection"><label>Projection</label><div class="select">Parallel<i></i></div></div>
          <div class="row display"><label>Display mode</label><div class="select">Wireframe<i></i></div></div>
          <div class="row locked"><label>Locked</label><i class="cb"></i></div>
          <hr>
          <h4 class="sub">Camera</h4>
          <div class="row"><label>Lens Length (mm)</label><div class="field off">8.763</div><i class="step off"></i></div>
          <div class="row"><label>Rotation</label><div class="field">0.0</div><i class="step"></i></div>
          <div class="row"><label>X Location</label><div class="field">1304.389</div><i class="step"></i></div>
          <div class="row"><label>Y Location</label><div class="field">-4682.416</div><i class="step"></i></div>
          <div class="row"><label>Z Location</label><div class="field">1645.270</div><i class="step"></i></div>
          <div class="row"><label>Distance to Target</label><div class="field distance">1645.270</div></div>
          <div class="row"><label>Location</label><div class="btn">Place...</div></div>
          <hr class="wide-gap">
          <h4 class="sub">Target</h4>
          <div class="row"><label>X Target</label><div class="field">1304.389</div><i class="step"></i></div>
          <div class="row"><label>Y Target</label><div class="field">-4682.416</div><i class="step"></i></div>
          <div class="row"><label>Z Target</label><div class="field">0.000</div><i class="step"></i></div>
          <div class="row"><label>Location</label><div class="btn">Place...</div></div>
          <hr class="wide-gap">
          <h4 class="sub">Wallpaper</h4>
          <div class="row"><label>Filename</label><div class="field file">(none)</div><div class="btn dots">...</div></div>
          <div class="row show"><label>Show</label><i class="cb on"></i></div>
          <div class="row gray"><label>Gray</label><i class="cb on"></i></div>
        </div>
        <div class="strip">
          <span class="strip-on"><i class="wheel small"></i></span>
          <div class="strip-rest">
            <svg viewBox="6 8 44 46" width="28" height="29"><use href="#layers"/></svg>
            <svg viewBox="0 0 30 30" width="30" height="30"><rect x="1.500" y="1.500" width="27" height="23" fill="#c9cacb" stroke="#222" stroke-width="3"/><path d="M12 25H18V28H22V30H8V28H12Z" fill="#222"/></svg>
            <svg viewBox="0 0 30 30" width="30" height="30"><rect x="1" y="1" width="28" height="28" fill="#fff" stroke="#333" stroke-width="2"/><path d="M2 3H28" stroke="#2c3da8" stroke-width="4"/><ellipse cx="15" cy="17" rx="12.500" ry="10" fill="#3c50c0"/><text x="15" y="24.500" class="q q-small">?</text></svg>
            <svg viewBox="0 0 30 22" width="30" height="22"><defs><linearGradient id="dome" x1="0" y1="0" x2="1" y2="0"><stop offset="0" stop-color="#3568d0"/><stop offset=".5" stop-color="#68c9c4"/><stop offset="1" stop-color="#d8ee9a"/></linearGradient></defs><path d="M1 17Q3 1 15 1T29 17Q15 24 1 17Z" fill="url(#dome)" stroke="#000" stroke-width="1.500"/><path d="M2 17Q5 12 15 12T28 17Q15 22 2 17Z" fill="#6fe8b4"/></svg>
            <svg viewBox="0 0 28 30" width="28" height="30" stroke="#000" stroke-width="1.500"><path d="M1 22L6 18L16 7L24 13L14 26L7 29Z" fill="#eee"/><path d="M12 11L17 5L25 10L20 17Z" fill="#cf4420"/><path d="M19 5L22 1L27 2L25 9Z" fill="#bbb"/></svg>
            <svg viewBox="0 0 24 30" width="24" height="30"><path d="M1.500 1.500H18L22.500 6V28.500H1.500Z" fill="#fff" stroke="#222" stroke-width="2"/><path d="M4 5H20V26H4ZM12 5V26M4 15H20" fill="none" stroke="#bbb" stroke-width="1.500"/><path d="M18 1V6H23Z"/></svg>
          </div>
        </div>
      </div>
    </aside>
  </main>

  <footer class="status">
    <svg width="24" height="24" viewBox="0 0 24 24"><path d="M1.500 2.500H22.500V21.500H1.500Z" fill="#fff" stroke="#4a4a4a" stroke-width="3"/><path d="M1 1H8V23H1Z" fill="#4a4a4a"/></svg>
    <svg width="34" height="28" viewBox="0 0 34 28" stroke="#6a6a6a" stroke-width="3" stroke-linecap="round"><path d="M5 4h.1M5 14h.1M5 24h.1M12 4H31M12 14H31M12 24H31"/></svg>
    <span>CPlane</span>
    <span class="coords">x 1399.46&nbsp; y -4378.64&nbsp; z 0</span>
    <span>Millimeters</span>
    <i class="swatch"></i>
    <span>Middle</span>
    <b class="w-grid">Grid Snap</b>
    <span>Ortho</span>
    <b class="w-planar">Planar</b>
    <b class="w-osnap">Osnap</b>
    <b class="w-smart">SmartTrack</b>
    <b class="w-gumball">Gumball (CPlane)</b>
    <svg width="20" height="28" viewBox="0 0 20 28" fill="none" stroke="#999" stroke-width="2"><rect x="1.500" y="12" width="17" height="14"/><path d="M5 12V7Q5 2 10 2T15 7V12"/></svg>
    <span>Auto CPlane (Object)</span>
    <span>Record History</span>
    <b class="w-filter">Filter</b>
    <span>Memory use: 848 MB</span>
    <svg width="24" height="24" viewBox="0 0 24 24"><path d="M1.500 2.500H22.500V21.500H1.500Z" fill="#fff" stroke="#4a4a4a" stroke-width="3"/><path d="M16 1H23V23H16Z" fill="#4a4a4a"/></svg>
  </footer>
</div>

<div class="dock">
  <div class="app finder run"><svg viewBox="0 0 64 64"><path d="M35 0H64V64H40Q37 52 37 38H27Q28 14 35 0Z" fill="#e6eaf0"/><path d="M17 18V24M47 18V24" stroke="#222" stroke-width="3" stroke-linecap="round"/><path d="M13 43Q32 58 51 43" fill="none" stroke="#222" stroke-width="2.500" stroke-linecap="round"/></svg></div>
  <div class="app ink"><svg viewBox="0 0 64 64"><circle cx="32" cy="32" r="26" fill="#65d46e"/><g fill="none" stroke="#121212" stroke-linecap="round"><path d="M16 24Q33 18 49 27" stroke-width="5"/><path d="M17 33Q32 28 46 36" stroke-width="4.300"/><path d="M19 41Q32 37 43 44" stroke-width="3.600"/></g></svg></div>
  <div class="app adobe vid">Pr</div>
  <div class="app adobe vid">Ae</div>
  <div class="app archi"><svg viewBox="0 0 64 64" fill="none" stroke="#fff" stroke-width="4.500" stroke-linecap="round"><path d="M13 48C22 28 30 16 40 17C46 18 50 24 49 30M49 37V38"/></svg></div>
  <div class="app white"><svg viewBox="0 0 64 64" fill="#2363a0"><path d="M32 11L50 21V42L33 53V33L24 28V23L41 33V45L45 42V30L28 20L15 27V22Z"/><path d="M14 30L29 39V52L14 42V37L24 43V40L14 34Z"/><path d="M26 18L47 29M33 14L49 24" stroke="#fff" stroke-width="2"/></svg></div>
  <div class="app rhino run"><svg viewBox="0 0 64 64"><path d="M4 2C0 18 4 32 18 42C24 54 32 60 38 62L44 60L42 50C56 52 64 40 63 30C58 38 52 42 45 40L36 36C26 30 14 20 14 2L10 2C10 14 12 24 18 32C8 26 4 14 4 2Z" fill="#fff"/><path d="M0 8Q0 30 8 38L2 30ZM18 40L32 46L30 48ZM27 50L34 56L32 58ZM37 54L42 51L41 58Z" fill="#111"/><circle cx="21" cy="38" r="2" fill="#d22"/><text x="49" y="30" class="eight">8</text></svg></div>
  <div class="app white"><svg viewBox="0 0 64 64"><path d="M14 15H57V58H14Z" fill="#8a3d12"/><path d="M7 10L14 7H52V44H12L7 46Z" fill="#f0762c"/><path d="M7 10L14 7V44L7 46Z" fill="#f59a5c"/><path d="M12 44H57V58H12Z" fill="#7c3a16"/><text x="34" y="34" class="fus-f">F</text><text x="34" y="55" class="fus">FUS</text></svg></div>
  <div class="app blender"><svg viewBox="0 0 64 64" fill="none" stroke="#fff"><circle cx="38" cy="36" r="13" stroke-width="9"/><circle cx="38" cy="36" r="5" fill="#fff" stroke="none"/><path d="M8 43L27 28M13 23H40M30 13L46 26" stroke-width="5.500" stroke-linecap="round"/></svg></div>
  <div class="app white"><svg viewBox="0 0 64 64"><circle cx="32" cy="32" r="28" fill="#ececec" stroke="#ccc"/><circle cx="32" cy="32" r="25" fill="#3a86f7"/><path d="M32 20L42 26V38L32 44L22 38V26Z" fill="#333"/><path d="M32 20L52 17M42 26L54 45M42 38L33 57M32 44L12 47M22 38L10 19M22 26L31 7" stroke="#eaf3ff" stroke-width="2.500"/></svg></div>
  <div class="app adobe ai">Ai</div>
  <div class="app adobe id">Id</div>
  <div class="app adobe ps">Ps</div>
  <div class="app github"><svg viewBox="-2.700 -2.700 29.400 29.400" fill="#f0eef3"><path d="M12 .297c-6.630 0-12 5.373-12 12 0 5.303 3.438 9.800 8.205 11.385.600.113.820-.258.820-.577 0-.285-.010-1.040-.015-2.040-3.338.724-4.042-1.610-4.042-1.610C4.422 18.070 3.633 17.700 3.633 17.700c-1.087-.744.084-.729.084-.729 1.205.084 1.838 1.236 1.838 1.236 1.070 1.835 2.809 1.305 3.495.998.108-.776.417-1.305.760-1.605-2.665-.300-5.466-1.332-5.466-5.930 0-1.310.465-2.380 1.235-3.220-.135-.303-.540-1.523.105-3.176 0 0 1.005-.322 3.300 1.230.960-.267 1.980-.399 3-.405 1.020.006 2.040.138 3 .405 2.280-1.552 3.285-1.230 3.285-1.230.645 1.653.240 2.873.120 3.176.765.840 1.230 1.910 1.230 3.220 0 4.610-2.805 5.625-5.475 5.920.420.360.810 1.096.810 2.220 0 1.606-.015 2.896-.015 3.286 0 .315.210.690.825.570C20.565 22.092 24 17.592 24 12.297c0-6.627-5.373-12-12-12"/></svg></div>
  <div class="app white run"><svg viewBox="0 0 64 64"><path d="M41 10L9 38L14 42L43 21Z" fill="#2a6fc0"/><path d="M41 54L9 26L14 21L43 43Z" fill="#1f5fae"/><path d="M41 10L54 16V48L41 54L43 43V21Z" fill="#3f97ea"/></svg></div>
  <div class="app arduino"><svg viewBox="0 0 64 64" fill="none" stroke="#f0f2f0" stroke-width="4.500"><path d="M32 32C28 24 24 22 20 22A10 10 0 0 0 20 42C24 42 28 40 32 32C36 24 40 22 44 22A10 10 0 0 1 44 42C40 42 36 40 32 32Z"/><path d="M16 32H24M40 32H48M44 28V36" stroke-width="2.500"/></svg></div>
  <div class="app olive"><svg viewBox="0 0 64 64" stroke="#000" stroke-width="2.500"><path d="M32 1V63M12 13L26 26M52 13L38 26M12 51L26 38M52 51L38 38" fill="none"/><circle cx="32" cy="32" r="12" fill="#fff"/><path d="M29 29H35V35H29ZM8 9H16V17H8ZM48 9H56V17H48ZM8 47H16V55H8ZM48 47H56V55H48Z"/></svg></div>
  <div class="app ink2"><svg viewBox="0 0 64 64"><defs><linearGradient id="aqua" x1="0" y1="1" x2="1" y2="0"><stop offset="0" stop-color="#3f9af0"/><stop offset="1" stop-color="#79f2c4"/></linearGradient></defs><rect x="11" y="20" width="26" height="28" rx="4" fill="#2b5490"/><path d="M33 16H49Q53 16 53 20V40Q53 44 49 44H25L29 19Q29 16 33 16Z" fill="url(#aqua)"/></svg></div>
  <div class="app term"><svg viewBox="0 0 64 64" fill="none" stroke="#fff" stroke-width="2.500"><path d="M11 12L17 16.500L11 21M21 24H30"/></svg></div>
  <div class="app arc run"><svg viewBox="0 0 64 64" fill="none" stroke-linecap="round" stroke-linejoin="round"><path d="M16 48L31 16L47 48M11 31Q18 44 32 42Q48 38 50 23" stroke="#fff" stroke-width="13"/><path d="M32 42Q48 38 50 23" stroke="#ee6a9c" stroke-width="8"/><path d="M11 31Q18 44 32 42" stroke="#4a35f2" stroke-width="8"/><path d="M16 48L30 18" stroke="#8a6cf0" stroke-width="8"/><path d="M31 17L47 48" stroke="#f98a7c" stroke-width="9"/></svg></div>
  <div class="app fox run"><svg viewBox="0 0 64 64"><defs><linearGradient id="foxg" x1="1" y1="0" x2="0" y2="1"><stop offset="0" stop-color="#fff04a"/><stop offset=".5" stop-color="#fb8a2c"/><stop offset="1" stop-color="#e9304f"/></linearGradient></defs><path d="M34 14Q38 4 41 3Q44 10 50 14Q60 24 60 38Q56 60 32 60Q6 58 5 34Q6 20 13 12L16 20Q22 17 24 17Z" fill="url(#foxg)"/><circle cx="32" cy="33" r="13" fill="#6a48e8"/><path d="M10 24Q22 22 30 28Q24 30 24 36Q30 42 40 38Q34 50 22 44Q10 38 10 24Z" fill="#f7683a"/></svg></div>
  <div class="app white"><svg viewBox="0 0 64 64"><circle cx="32" cy="32" r="27" fill="#4fa153"/><path d="M8.600 18.500A27 27 0 0 1 55.400 18.500H32L20.300 38.700Z" fill="#d8473a"/><path d="M55.400 18.500A27 27 0 0 1 32 59L43.700 38.700L32 18.500Z" fill="#f2bb3e"/><circle cx="32" cy="32" r="13" fill="#fff"/><circle cx="32" cy="32" r="10.500" fill="#3f7de2"/></svg></div>
  <div class="app whats run"><svg viewBox="0 0 64 64"><path d="M10 54L14 42A22 22 0 1 1 22 50Z" fill="none" stroke="#fff" stroke-width="4.500" stroke-linejoin="round"/><path d="M24 21Q28 20 29 28L27 31Q30 37 36 39L39 36Q46 38 46 41Q43 48 36 46Q22 42 20 28Q20 23 24 21Z" fill="#fff"/></svg></div>
  <div class="app white"><svg viewBox="0 0 64 64"><circle cx="32" cy="32" r="27.500" fill="#45a3e2"/><path d="M15 31L46 18.500L41 47L31 39L27 44L25 35Z" fill="#fff"/><path d="M25 35L42 22L29 37L27 44Z" fill="#bcdcf2"/></svg></div>
  <div class="app white"><svg viewBox="-4.500 -4.500 33 33" fill="#2b333d"><path d="M22.282 9.821a5.985 5.985 0 0 0-.516-4.911 6.046 6.046 0 0 0-6.510-2.900A6.065 6.065 0 0 0 4.981 4.182a5.985 5.985 0 0 0-3.998 2.900 6.046 6.046 0 0 0 .743 7.097 5.980 5.980 0 0 0 .511 4.911 6.051 6.051 0 0 0 6.515 2.900A5.985 5.985 0 0 0 13.260 24a6.056 6.056 0 0 0 5.772-4.206 5.989 5.989 0 0 0 3.998-2.900 6.056 6.056 0 0 0-.748-7.073zm-9.022 12.608a4.476 4.476 0 0 1-2.876-1.041l.142-.080 4.778-2.758a.795.795 0 0 0 .393-.681v-6.737l2.020 1.169a.071.071 0 0 1 .038.052v5.583a4.504 4.504 0 0 1-4.495 4.494zm-9.661-4.125a4.471 4.471 0 0 1-.535-3.014l.142.085 4.783 2.758a.771.771 0 0 0 .781 0l5.843-3.369v2.332a.080.080 0 0 1-.033.062L9.740 19.950a4.499 4.499 0 0 1-6.141-1.646zM2.341 7.896a4.485 4.485 0 0 1 2.366-1.973V11.600a.766.766 0 0 0 .388.677l5.814 3.354-2.020 1.169a.076.076 0 0 1-.071 0l-4.830-2.787A4.504 4.504 0 0 1 2.341 7.872zm16.596 3.856L13.104 8.364 15.119 7.200a.076.076 0 0 1 .071 0l4.830 2.791a4.494 4.494 0 0 1-.677 8.104v-5.677a.790.790 0 0 0-.407-.667zm2.011-3.023l-.142-.085-4.774-2.782a.776.776 0 0 0-.785 0L9.409 9.230V6.897a.066.066 0 0 1 .028-.062l4.830-2.787a4.499 4.499 0 0 1 6.680 4.660zM8.307 12.863l-2.020-1.164a.080.080 0 0 1-.038-.057V6.074a4.499 4.499 0 0 1 7.376-3.454l-.142.081L8.704 5.459a.795.795 0 0 0-.393.681zm1.098-2.365l2.602-1.500 2.607 1.500v2.999l-2.597 1.500-2.607-1.500Z"/></svg></div>
  <div class="app white pages run"><svg viewBox="0 0 64 64"><path d="M10 16H54M10 25H54M10 34H54M10 42H54M10 49H54" stroke="#e6e6e6" stroke-width="3"/><text x="32" y="49" class="serif-t">T</text></svg></div>
  <div class="app keynote"><svg viewBox="0 0 64 64"><path d="M17 9H47L51 28H13Z" fill="#f6f6f6"/><path d="M17 25H47" stroke="#2f7192" stroke-width="2"/><circle cx="32" cy="17" r="6" fill="#f0a53c"/><path d="M32 17V11A6 6 0 0 0 26 17Z" fill="#b13fc4"/><path d="M32 17V23A6 6 0 0 0 38 17Z" fill="#47b86a"/><path d="M30.500 28H33.500V52H30.500ZM22 52H42V55H22Z" fill="#e8eef8"/></svg></div>
  <div class="app numbers"><svg viewBox="0 0 64 64" fill="#f2f8ee"><rect x="12" y="41" width="8" height="13" rx="1"/><rect x="23" y="30" width="8" height="24" rx="1"/><rect x="34" y="10" width="8" height="44" rx="1"/><rect x="45" y="21" width="8" height="33" rx="1"/></svg></div>
  <div class="app clean"><svg viewBox="3 3 58 58"><path d="M11 12H53Q56 12 57 16L59 40Q59 44 55 44H9Q5 44 5 40L7 16Q8 12 11 12Z" fill="#e8669d"/><path d="M6 36H59V40Q59 44 55 44H9Q5 44 5 40Z" fill="#cf4a88"/><path d="M32 11L50 28L52 40M50 16L51 28" fill="none" stroke="#5b2440" stroke-width="1.800"/><path d="M26 44H38V50L42 53H22L26 50Z" fill="#9d92b5"/></svg></div>
  <div class="app settings"><svg viewBox="0 0 64 64" fill="none" stroke="#2c2c2c"><circle cx="32" cy="32" r="25" stroke-width="3" stroke-dasharray="2 1.270"/><circle cx="32" cy="32" r="20.500" fill="#8b8b8b" stroke-width="5"/><circle cx="32" cy="32" r="11" fill="#555" stroke-width="3"/><path d="M32 32L50 32M32 32L22 15M32 32L22 49" stroke="#b9b9b9" stroke-width="3.500"/><circle cx="32" cy="32" r="3" fill="#444"/></svg><em>1</em></div>
  <i class="divider"></i>
  <svg class="trash" viewBox="0 0 58 70" width="58" height="70"><defs><linearGradient id="bin" x1="0" y1="0" x2="1" y2="0"><stop offset="0" stop-color="#d4d5d7"/><stop offset=".3" stop-color="#eee"/><stop offset="1" stop-color="#cfd0d2"/></linearGradient></defs><path d="M2 8L9 62Q12 69 29 69T49 62L56 8Z" fill="url(#bin)"/><ellipse cx="29" cy="8" rx="27" ry="6" fill="#b4b4b4" stroke="#e8e8e8" stroke-width="1.500"/></svg>
</div>
</body>
</html>
```
FILE: styles.css
```css
* { box-sizing: border-box; }
body {
  margin: 0;
  width: 3024px;
  height: 1964px;
  overflow: hidden;
  background: #000;
  color: #262626;
  font-family: Inter, "Liberation Sans", sans-serif;
  font-size: 22px;
  line-height: 1;
  white-space: nowrap;
}
i { font-style: normal; display: block; flex: none; }
svg { display: block; flex: none; }
.defs { position: absolute; }

/* menu bar */
.menubar {
  height: 76px;
  padding: 0 0 3px 44px;
  display: grid;
  grid-template-columns: 68px 145px 94px 98px 109px 122px 146px 116px 112px 117px 564px 174px 115px 146px 139px 148px 117px 74px 66px 64px auto;
  align-items: center;
  color: #fff;
  font-size: 26px;
  font-weight: 500;
}
.menubar b { font-weight: 700; letter-spacing: .3px; }
.apple { width: 27px; height: 32px; margin-top: -4px; }
.clock { color: #e8e8e8; letter-spacing: .75px; }

/* window */
.window {
  height: 1774px;
  border-radius: 20px;
  overflow: hidden;
  background: #d7d8dc;
}
.titlebar {
  height: 58px;
  display: flex;
  align-items: center;
  background: #ececec;
  border-top: 2px solid #fbfbfb;
  border-bottom: 2px solid #b4b5b8;
  padding: 0 0 2px 16px;
}
.lights { display: flex; gap: 16px; width: 1254px; }
.lights i { width: 24px; height: 24px; border-radius: 50%; border: 1px solid rgba(0,0,0,.14); }
.red { background: radial-gradient(#6e0b06 0 3.500px, #ee6a5f 4.500px); }
.yellow { background: #f5bf4f; }
.green { background: #61c554; }
.doc { display: flex; align-items: center; font-size: 26px; color: #424242; }
.doc b { font-weight: 700; margin-left: 12px; width: 346px; letter-spacing: .45px; }
.dash { width: 23px; height: 3px; background: #b4b4b4; margin-right: 14px; }
.edited { color: #b0b0b0; }

/* ribbon */
.ribbon { display: flex; height: 94px; margin: 0 6px 6px; }
.grip {
  width: 28px;
  border-right: 2px solid #d7d8dc;
  border-radius: 12px 0 0 12px;
  background: #ebebeb;
  display: flex;
  flex-direction: column;
  align-items: center;
  justify-content: flex-end;
  gap: 6px;
  padding-bottom: 28px;
}
.grip i, .grip-row i { width: 6px; height: 6px; border-radius: 50%; border: 2px solid #a6a6a8; }
.ribbon-main { flex: 1; }
.tabs {
  height: 40px;
  display: grid;
  grid-template-columns: 156px 125px 132px 117px 106px 211px 128px 146px 182px 155px 159px 159px 177px 124px 872px 26px;
  align-items: center;
  color: #6d6d6f;
}
.tabs svg { margin-top: -3px; }
.tab-on {
  position: relative;
  width: 136px;
  height: 40px;
  line-height: 40px;
  padding-left: 21px;
  color: #222;
  background: #ebebeb;
  border-radius: 12px 12px 0 0;
}
.tab-on::after {
  content: "";
  position: absolute;
  left: 136px;
  bottom: 0;
  width: 12px;
  height: 12px;
  background: radial-gradient(circle at 100% 0, transparent 11.500px, #ebebeb 12px);
}
.toolbar { display: flex; align-items: flex-end; height: 54px; background: #ebebeb; }
.cell { position: relative; width: 56px; height: 56px; flex: none; }
.cell svg { width: 56px; height: 56px; overflow: visible; }
.more::after {
  content: "";
  position: absolute;
  right: 0;
  bottom: 0;
  width: 13px;
  height: 12px;
  background: #666;
  clip-path: polygon(100% 0, 100% 100%, 0 100%);
}
.q { font: 700 37px "Liberation Serif", serif; fill: #fff; text-anchor: middle; }
.q-small { font-size: 22px; }
.wheel {
  margin: 10px 8px;
  width: 40px;
  height: 40px;
  border: 2.500px solid #000;
  border-radius: 50%;
  background: radial-gradient(#ebebeb 0 9.500px, transparent 10.500px), conic-gradient(red, #ff0 60deg, #0f0 120deg, #0ff 180deg, #00f 240deg, #f0f 300deg, red);
}
.wheel.small {
  margin: 0;
  width: 27px;
  height: 27px;
  background: radial-gradient(#ebebeb 0 6.500px, transparent 7.500px), conic-gradient(#e22, #fc3 60deg, #7f3 120deg, #2ea 180deg, #22e 240deg, #c1d 300deg, #e22);
}

/* main area */
.main {
  height: 1560px;
  padding: 0 6px;
  display: grid;
  grid-template-columns: 252px 2222px 526px;
  column-gap: 6px;
}
.panel { background: #ebebeb; border-radius: 14px 14px 0 0; }
.left { display: flex; flex-direction: column; gap: 6px; }
.tools-panel { height: 780px; }
.grip-row {
  height: 28px;
  border-bottom: 2px solid #d7d8dc;
  display: flex;
  gap: 6px;
  align-items: center;
  justify-content: center;
}
.command {
  margin: 21px 17px 25px;
  height: 40px;
  padding: 0 6px;
  line-height: 39px;
  font-size: 26px;
  color: #bfbfbf;
  background: #fff;
  border: 1px solid #dadada;
  border-bottom: 2px solid #b5b5b5;
}
.tools { display: grid; grid-template-columns: repeat(4, 56px); margin-left: 8px; }
.tee { font: 700 50px "Liberation Serif", serif; text-anchor: middle; fill: #5d78f0; stroke: #000; stroke-width: 1.500px; }
.tee-side { fill: #3549b5; }

.panel-head {
  height: 42px;
  padding: 0 8px 3px 9px;
  display: flex;
  justify-content: space-between;
  align-items: center;
  font-size: 26px;
  color: #8b8b8d;
  border-bottom: 2px solid #d7d8dc;
}
.osnap { flex: 1; }
.osnap-tabs { height: 40px; display: flex; background: #d7d8dc; }
.osnap-tab { padding: 5px 21px; }
.osnap-tab.on { position: relative; width: 72px; padding-left: 19px; background: #ebebeb; border-radius: 0 10px 0 0; }
.osnap-tab.on::after {
  content: "";
  position: absolute;
  left: 72px;
  bottom: 0;
  width: 10px;
  height: 10px;
  background: radial-gradient(circle at 100% 0, transparent 9.500px, #ebebeb 10px);
}
.checks { padding: 15px 0 0 28px; }
.checks label { display: flex; align-items: center; gap: 7px; height: 30px; letter-spacing: .1px; }
.checks .disable { margin-top: 34px; }
.cb {
  width: 24px;
  height: 24px;
  border-radius: 5px;
  background: #fff;
  border: 1px solid #cfcfcf;
  border-top-color: #bbb;
  box-shadow: inset 0 2px 2px rgba(0,0,0,.06);
}
.cb.on { border: 0; background: linear-gradient(#4b90f9, #2f72f2); position: relative; }
.cb.on::after {
  content: "";
  position: absolute;
  left: 8.500px;
  top: 3px;
  width: 7px;
  height: 13px;
  border: solid #fff;
  border-width: 0 3px 3px 0;
  border-radius: 1px;
  transform: rotate(42deg);
}

/* viewport */
.viewport { position: relative; height: 1508px; background: #9ea2aa; }
.drawing { width: 2222px; height: 1508px; }
.axis { font-size: 26px; fill: #5c5e62; stroke: none; }
.vp-label {
  position: absolute;
  left: 2px;
  top: 2px;
  height: 38px;
  display: flex;
  background: #21538f;
  color: #fff;
  font-weight: 700;
  font-size: 25px;
}
.vp-label span { width: 121px; padding-left: 8px; line-height: 38px; border-right: 2px solid #fff; letter-spacing: -.2px; }
.vp-label i { margin: 16px 8px 0 7px; border: 8px solid transparent; border-top: 8px solid #fff; border-bottom: 0; height: 8px; }
.vp-tabs {
  height: 52px;
  padding: 0 0 4px 20px;
  display: grid;
  grid-template-columns: 64px 58px 39px 183px 38px 144px 39px 124px 41px 142px 39px auto;
  align-items: center;
  background: #efeff0;
  font-size: 25px;
  color: #555;
}
.vp-tabs i { width: 2px; height: 28px; background: #555; margin-top: 4px; }
.vp-tabs span { padding-bottom: 6px; padding-top: 2px; letter-spacing: .2px; }
.vp-tabs .active { color: #1762e6; }

/* properties */
.props { display: flex; height: 1518px; }
.form { width: 486px; }
.modes { display: flex; gap: 12px; height: 75px; padding: 4px 0 0 178px; }
.mode-cam { width: 48px; height: 48px; background: #fff; }
.mode-vp { width: 48px; height: 44px; margin-top: 2px; border: 2px solid #666; background: linear-gradient(90deg, #ccc, #bdbdbd); padding: 4px 2px; }
.mode-vp i { height: 32px; width: 40px; border: 2px solid #5ab0ea; background: #fff; box-shadow: inset 0 0 0 2px #dcdcdc, inset 0 0 0 4px #d8301e; }
.form h4 { margin: 0; height: 46px; line-height: 47px; padding-left: 20px; font-size: 22px; font-weight: 400; letter-spacing: .15px; }
.form h4.sub { height: 55px; padding-top: 9px; }
.row { height: 54px; display: flex; align-items: center; }
.row label { width: 243.500px; margin-right: 21.500px; text-align: right; padding-bottom: 2px; }
.field {
  width: 168px;
  height: 34px;
  padding-left: 6.500px;
  line-height: 33px;
  background: #fff;
  border: 1px solid #d9d9d9;
  border-bottom: 2px solid #b9b9b9;
  letter-spacing: .3px;
}
.field.off { background: #f4f4f4; color: #bcbcbc; border-color: #e4e4e4; border-bottom-color: #ccc; }
.field.full { width: 196px; }
.field.distance { width: 190px; }
.field.file { width: 132px; height: 36px; color: #bcbcbc; }
.step {
  position: relative;
  width: 23px;
  height: 34px;
  margin-left: 6px;
  border-radius: 8px;
  background: linear-gradient(#fff 16px, #d4d4d4 16px 18px, #fff 18px);
  box-shadow: 0 0 2px rgba(0,0,0,.3), 0 1px 1px rgba(0,0,0,.2);
}
.step::before, .step::after {
  content: "";
  position: absolute;
  left: 7px;
  width: 9px;
  height: 9px;
  border: solid #262626;
  border-width: 3px 0 0 3px;
  transform: scaleY(.75) rotate(45deg);
  top: 5px;
}
.step::after { top: 20px; transform: scaleY(.75) rotate(225deg); }
.step.off { background: linear-gradient(#f4f4f4 16px, #ddd 16px 18px, #f4f4f4 18px); box-shadow: 0 0 2px rgba(0,0,0,.15); }
.step.off::before, .step.off::after { border-color: #b4b4b4; }
.select, .btn {
  height: 32px;
  width: 198px;
  margin-left: -1px;
  border-radius: 9px;
  background: #fff;
  line-height: 32px;
  box-shadow: 0 0 2px rgba(0,0,0,.25), 0 1px 1px rgba(0,0,0,.25);
}
.select { display: flex; align-items: center; justify-content: space-between; padding: 0 4px 0 12px; letter-spacing: .2px; }
.select i { position: relative; width: 24px; height: 24px; border-radius: 5px; background: linear-gradient(#4b90f9, #2f72f2); }
.select i::before, .select i::after {
  content: "";
  position: absolute;
  left: 8px;
  top: 5px;
  width: 8px;
  height: 8px;
  border: solid #fff;
  border-width: 2.500px 0 0 2.500px;
  transform: scaleY(.8) rotate(45deg);
}
.select i::after { top: 12px; transform: scaleY(.8) rotate(225deg); }
.btn { text-align: center; letter-spacing: .2px; padding-right: 2px; }
.btn.dots { width: 48px; margin-left: 17px; }
.row.projection { height: 47px; }
.row.display { height: 48px; }
.row.locked { height: 44px; }
.row.show { height: 46px; }
.row.gray { height: 42px; }
.row .cb { margin-left: -1px; }
.form hr { margin: 26px 24px 0 16px; height: 2px; border: 0; background: #cdcdcd; }
.form hr.wide-gap { margin-top: 27px; }
.strip { width: 40px; background: #ebebeb; }
.strip-on {
  display: block;
  height: 72px;
  padding: 22px 0 0 7px;
  border-radius: 0 0 12px 0;
  background: #ebebeb;
  box-shadow: 12px 12px 0 #d7d8dc;
  clip-path: inset(0);
}
.strip-rest {
  display: grid;
  grid-auto-rows: 72px;
  place-items: center;
  height: 1446px;
  background: #d7d8dc;
  border-top-left-radius: 10px;
}

/* status bar */
.status {
  height: 56px;
  margin: 0 6px;
  padding: 0 0 6px 10px;
  display: grid;
  grid-template-columns: 34px 71px 189px 398px 167px 44px 175px 161px 85px 108px 108px 166px 242px 41px 271px 184px 115px 409px auto;
  align-items: center;
  background: linear-gradient(#ebebeb, #dcdcdc 50px, #c0c1c6 50px 54px, #8d8e92 55px);
  color: #444;
}
.status svg { margin-top: 2px; }
.status .coords { letter-spacing: .25px; }
.status b { height: 38px; line-height: 38px; margin-top: 1px; text-align: center; font-weight: 700; color: #222; background: #f8f8f8; border-radius: 4px; }
.w-grid { width: 136px; }
.w-planar { width: 98px; }
.w-osnap { width: 99px; }
.w-smart { width: 157px; }
.w-gumball { width: 221px; letter-spacing: .15px; }
.w-filter { width: 86px; }
.swatch { width: 31px; height: 30px; background: #d9534f; border: 2px solid #333; }

/* dock */
.dock {
  margin: 4px 0 0 217px;
  width: 2591px;
  height: 100px;
  padding: 13px 12px;
  display: flex;
  gap: 18px;
  background: #555;
  border: 2px solid #757575;
  border-radius: 34px;
}
.app {
  position: relative;
  width: 64px;
  height: 64px;
  flex: none;
  border-radius: 15px;
  box-shadow: 0 1px 2px rgba(0,0,0,.4);
}
.app svg { width: 64px; height: 64px; border-radius: 15px; }
.run::before {
  content: "";
  position: absolute;
  left: 28px;
  top: 73px;
  width: 8px;
  height: 8px;
  border-radius: 50%;
  background: #000;
}
.finder { background: linear-gradient(#5fc8f7, #3a6ef0); }
.ink { background: #121212; }
.ink2 { background: #222; }
.adobe { font: 700 35px/62px "Open Sans", sans-serif; text-align: center; letter-spacing: -1px; }
.vid { background: #00005b; color: #9a9aff; }
.ai { background: #320000; color: #f7a13a; }
.id { background: #470b22; color: #f9446c; }
.ps { background: #051d34; color: #52a8fb; }
.archi { background: linear-gradient(100deg, #9aa3d8, #2c3fd0); }
.white { background: linear-gradient(#fff, #f1f3f8); }
.rhino { background: linear-gradient(#4d5260, #2a2622); }
.rhino svg { overflow: visible; }
.eight { font: 400 36px Inter, sans-serif; fill: #c2c4c9; text-anchor: middle; }
.fus-f { font: 700 27px Inter, sans-serif; fill: #fff; text-anchor: middle; }
.fus { font: 700 11px Inter, sans-serif; fill: #fff; text-anchor: middle; }
.blender { background: linear-gradient(#e79f3d, #d97a2b); }
.github { background: linear-gradient(#8e3eb0, #5b2d8a); }
.arduino { background: linear-gradient(#86c4c6, #3f9499 50%, #3d7e82); }
.olive { background: #868d68; border: 1px solid #000; }
.olive svg { width: 62px; height: 62px; }
.term { background: #222; border: 2px solid #b9c2c8; box-shadow: inset 0 0 0 4px #000; }
.term svg { width: 60px; height: 60px; }
.arc { background: linear-gradient(#f4dbe0, #dccbe4); }
.fox { background: #221640; }
.whats { background: linear-gradient(#85f283, #57bd47); }
.pages { box-shadow: -3px 3px 0 -1px #e2e2e2, 0 1px 2px rgba(0,0,0,.4); }
.serif-t { font: 700 52px "Liberation Serif", serif; fill: #262626; text-anchor: middle; }
.keynote { background: linear-gradient(#5cc3fa, #2e62e8); }
.numbers { background: linear-gradient(#97f07a, #5fd04a); }
.clean { background: #f1effc; border: 3px solid; border-color: #6f9bf4 #e8d9e8 #f2cf7a; }
.clean svg { width: 58px; height: 58px; border-radius: 0; }
.settings { background: linear-gradient(#d4dde2, #8d8d88); }
.settings em {
  position: absolute;
  left: 42px;
  top: -6px;
  width: 28px;
  height: 28px;
  border-radius: 50%;
  background: #e5493d;
  color: #fff;
  font: 400 19px/28px Inter, sans-serif;
  text-align: center;
}
.divider { width: 2px; height: 72px; margin: -2px 0 0 9px; background: #2e2e2e; }
.trash { margin: -2px 0 0 13px; }
```
